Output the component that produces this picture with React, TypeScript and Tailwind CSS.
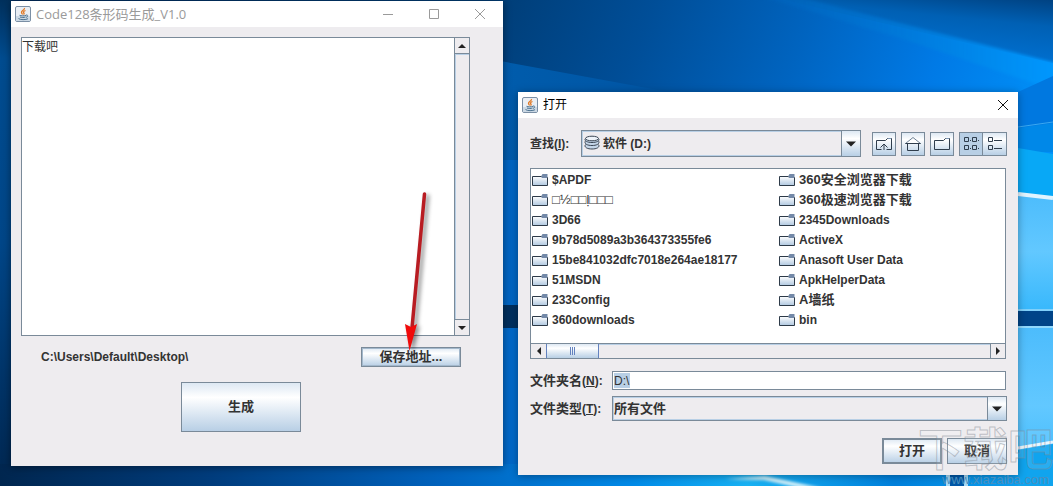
import type { ReactNode } from 'react';
import { clsx } from 'clsx';

const FOLDERS = [
  { name: '$APDF' },
  { name: '□½□□ḷ□□□', plain: true },
  { name: '3D66' },
  { name: '9b78d5089a3b364373355fe6' },
  { name: '15be841032dfc7018e264ae18177' },
  { name: '51MSDN' },
  { name: '233Config' },
  { name: '360downloads' },
  { name: '360安全浏览器下载', cjk: true },
  { name: '360极速浏览器下载', cjk: true },
  { name: '2345Downloads' },
  { name: 'ActiveX' },
  { name: 'Anasoft User Data' },
  { name: 'ApkHelperData' },
  { name: 'A墙纸', cjk: true },
  { name: 'bin' },
];

const METAL = 'bg-linear-to-b from-[#dde8f3] via-white via-30% to-[#b8cfe5] border border-[#7a8a99]';

function Wallpaper() {
  return (
    <svg className="absolute inset-0 h-full w-full" viewBox="0 0 1053 486" preserveAspectRatio="none" aria-hidden="true">
      <defs>
        <linearGradient id="sky" x1="0" y1="0" x2="1" y2=".2">
          <stop offset="0" stopColor="#002b5c" />
          <stop offset=".44" stopColor="#003c74" />
          <stop offset=".6" stopColor="#004e98" />
          <stop offset=".75" stopColor="#0064c0" />
          <stop offset=".88" stopColor="#007ae6" />
          <stop offset="1" stopColor="#0090f8" />
        </linearGradient>
        <linearGradient id="upper" x1=".6" y1="1" x2="1" y2="0">
          <stop offset="0" stopColor="#0074d8" />
          <stop offset=".6" stopColor="#0060b4" />
          <stop offset="1" stopColor="#003c78" />
        </linearGradient>
        <linearGradient id="beam" x1="0" y1="0" x2="1" y2="0">
          <stop offset="0" stopColor="#0060b8" stopOpacity=".5" />
          <stop offset="1" stopColor="#0098ff" />
        </linearGradient>
        <linearGradient id="lower" x1="0" y1="0" x2="1" y2="0">
          <stop offset="0" stopColor="#005cac" />
          <stop offset="1" stopColor="#0055a4" />
        </linearGradient>
        <linearGradient id="strip" x1="0" y1="0" x2="0" y2="1">
          <stop offset="0" stopColor="#00305c" />
          <stop offset=".12" stopColor="#004c90" />
          <stop offset=".5" stopColor="#004688" />
          <stop offset="1" stopColor="#00264f" />
        </linearGradient>
        <linearGradient id="floor" x1="0" y1="0" x2="1" y2="0">
          <stop offset="0" stopColor="#00264f" />
          <stop offset=".2" stopColor="#003c7c" />
          <stop offset=".42" stopColor="#0062bd" />
          <stop offset=".6" stopColor="#008ae8" />
          <stop offset=".71" stopColor="#18b2f4" />
          <stop offset=".85" stopColor="#0080dc" />
          <stop offset="1" stopColor="#10a8f4" />
        </linearGradient>
        <linearGradient id="pane" x1="0" y1="0" x2="0" y2="1">
          <stop offset="0" stopColor="#4cbcfc" />
          <stop offset=".5" stopColor="#62c8ff" />
          <stop offset="1" stopColor="#38b8fc" />
        </linearGradient>
        <filter id="soft" x="-20%" y="-40%" width="140%" height="180%">
          <feGaussianBlur stdDeviation="1.5" />
        </filter>
      </defs>
      <rect width="1053" height="486" fill="url(#sky)" />
      <path d="M785 0 L1060 65 V-5 H775 Z" fill="url(#upper)" />
      <path d="M755 -5 L790 -5 L1060 64 V92 L900 38 Z" fill="url(#beam)" filter="url(#soft)" />
      <rect width="11" height="486" fill="url(#strip)" />
      <path d="M495 60 L680 94 V320 H495Z" fill="url(#lower)" />
      <path d="M503 160 h15 v145 h-15Z" fill="#0066c4" />
      <path d="M503 305 h15 v23 h-15Z" fill="#00305f" />
      <path d="M503 328 h15 v158 h-15Z" fill="#0069c9" />
      <rect y="464" width="1053" height="24" fill="url(#floor)" />
      <path d="M1018 92 L1053 76 V145 H1018Z" fill="#0078e0" />
      <path d="M1018 128 L1053 123 V152 H1018Z" fill="#0088e8" />
      <path d="M1018 127 L1053 122" stroke="#3aa8f0" />
      <path d="M1018 148 L1053 154 V198 L1018 193Z" fill="#08a8f6" />
      <path d="M1018 193 L1053 197 V310 H1018Z" fill="url(#pane)" />
      <path d="M1018 194 L1053 198" stroke="#e0f4ff" strokeWidth="4" />
      <path d="M1018 310 H1053" stroke="#80d0fa" strokeWidth="2" />
      <rect x="1018" y="311" width="35" height="15" fill="#004488" />
      <rect x="1018" y="326" width="35" height="160" fill="url(#pane)" />
      <path d="M1018 327 H1053" stroke="#90d8fc" strokeWidth="2" />
      <path d="M1018 448 L1053 442" stroke="#e8f6ff" strokeWidth="3" />
      <path d="M1018 450 L1053 444 V486 H1018Z" fill="#10a4ee" />
      <path d="M725 479 L765 476 L822 488 H800 L764 480Z" fill="#d4f2fb" filter="url(#soft)" />
      <path d="M946 475 h4 v11 h-4Z M964 475 h4 v11 h-4Z" fill="#a8daf6" />
      <path d="M950 475 h14 v11 h-14Z" fill="#0058a8" />
    </svg>
  );
}

function JavaIcon() {
  return (
    <svg className="h-4 w-4 shrink-0" viewBox="0 0 16 16" fill="none" aria-hidden="true">
      <rect x=".5" y=".5" width="15" height="15" rx="1.5" fill="#e9eef4" stroke="#7b8fa5" />
      <path d="M1 10 H15 V15 H1Z" fill="#cbd8e4" />
      <path d="M9.500 2 C10 4 6 4.500 6.500 6.500 C6.700 7.300 7.500 7.700 7.300 8.500 M10.500 4.500 C8 5.500 8.200 6.300 9 7.200 C9.500 7.800 8.700 8.300 8.500 8.500" stroke="#e07824" strokeWidth="1.3" />
      <path d="M4.500 9.300 C6 10 9.500 10 11 9.300 M11 9 C13.500 8.600 13.200 11 11 11.300 M5 11 C6.500 11.700 9 11.700 10.500 11 M3.500 12.500 C5 14 11 14 13 12.700" stroke="#4d7391" />
    </svg>
  );
}

function FolderIcon() {
  return (
    <svg className="h-4 w-4 shrink-0" viewBox="0 0 16 16" aria-hidden="true">
      <defs>
        <linearGradient id="folder" x1="0" y1="0" x2="0" y2="1">
          <stop offset="0" stopColor="#fff" />
          <stop offset="1" stopColor="#b0c8e0" />
        </linearGradient>
      </defs>
      <path d="M.5 4.500 H9.500 V5.500 H15.500 V13.500 H.5Z" fill="url(#folder)" />
      <path d="M9 4.500 L10.500 2 H15.500 V5 H9Z" fill="#7389a8" />
      <path d="M.5 13.500 V4.500 H9 L10 5.500 H15.500 V13.500Z" fill="none" stroke="#2d3a48" />
      <path d="M10 5.500 H15" stroke="#7389a8" />
    </svg>
  );
}

function DriveIcon() {
  return (
    <svg className="pointer-events-none absolute left-[2px] top-[4px] h-4 w-4" viewBox="0 0 16 16" fill="#c5d6e8" stroke="#3b4654" aria-hidden="true">
      <path d="M1.500 9.500 C0 11.500 2 14 8 14 C14 14 16 11.500 14.500 9.500" />
      <path d="M1.500 6 C0 8 2 10.500 8 10.500 C14 10.500 16 8 14.500 6" />
      <path d="M1.500 3.500 C0 5 2 7.500 8 7.500 C14 7.500 16 5 14.500 3.500" />
      <ellipse cx="8" cy="3.500" rx="6.500" ry="2.300" fill="#eef3f9" />
    </svg>
  );
}

function Arrow({ dir, large }: { dir: 'up' | 'down' | 'left' | 'right'; large?: boolean }) {
  const paths = {
    up: 'M0 6 H8 L4 2Z',
    down: 'M0 2 H8 L4 6Z',
    left: 'M6 0 V8 L2 4Z',
    right: 'M2 0 V8 L6 4Z',
  };
  return (
    <svg className={large ? 'h-[10px] w-[10px]' : 'h-2 w-2'} viewBox="0 0 8 8" aria-hidden="true">
      <path d={paths[dir]} fill="#222" />
    </svg>
  );
}

function WindowButton({ label, children }: { label: string; children: ReactNode }) {
  return (
    <button type="button" aria-label={label} className="flex h-full w-[46px] items-center justify-center">
      <svg className="h-3 w-3" viewBox="0 0 12 12" fill="none" stroke="currentColor" aria-hidden="true">
        {children}
      </svg>
    </button>
  );
}

function ToolButton({ label, active, className, children }: { label: string; active?: boolean; className?: string; children: ReactNode }) {
  return (
    <button
      type="button"
      aria-label={label}
      className={clsx(
        'flex h-6 w-6 items-center justify-center',
        active ? 'border border-[#7a8a99] bg-[#b8cfe5]' : METAL,
        className,
      )}
    >
      <svg className="h-4 w-4 shrink-0" viewBox="0 0 16 16" fill="none" stroke="#2f3d4c" aria-hidden="true">
        {children}
      </svg>
    </button>
  );
}

function Combo({ id, value, icon, className }: { id: string; value: string; icon?: ReactNode; className?: string }) {
  return (
    <div className={clsx('relative border border-[#7a8a99]', className)}>
      <select
        id={id}
        className={clsx(
          'block h-full w-full appearance-none border border-[#b8cfe5] bg-[#eeecef] pr-6 font-bold outline-none',
          icon ? 'pl-5' : 'pl-0',
        )}
      >
        <option>{value}</option>
      </select>
      {icon}
      <span className="pointer-events-none absolute inset-y-0 right-0 flex w-[19px] items-center justify-center border-l border-[#7a8a99] bg-linear-to-b from-[#dde8f3] via-white via-30% to-[#b8cfe5]">
        <Arrow dir="down" large />
      </span>
    </div>
  );
}

function GeneratorWindow() {
  return (
    <section className="absolute left-[11px] top-px w-[492px] bg-[#eeecef] shadow-[0_1px_8px_rgba(0,0,0,0.45)]">
      <header className="flex h-[26px] items-center bg-white pl-1 text-[#9a9a9a]">
        <JavaIcon />
        <h1 className="flex-1 pl-[5px] font-['Open_Sans','Noto_Sans_CJK_SC',sans-serif] text-[13px] font-normal leading-4">
          Code128条形码生成_V1.0
        </h1>
        <WindowButton label="最小化"><path d="M1 6.500 H11" /></WindowButton>
        <WindowButton label="最大化"><path d="M1.500 1.500 H10.500 V10.500 H1.500Z" /></WindowButton>
        <WindowButton label="关闭"><path d="M1 1 L11 11 M11 1 L1 11" /></WindowButton>
      </header>

      <div className="pb-[34px] pl-[10px] pr-[33px] pt-[10px]">
        <div className="flex h-[299px] border border-[#7a8a99] bg-white">
          <textarea
            aria-label="条形码内容"
            className="block flex-1 resize-none overflow-hidden text-[12px] font-normal leading-[18px] outline-none"
            defaultValue="下载吧"
          />
          <div className="flex w-[15px] flex-col border-l border-[#7a8a99] bg-[#eeecef]">
            <button type="button" aria-label="向上" className="flex h-4 items-center justify-center border-b border-[#7a8a99]">
              <Arrow dir="up" />
            </button>
            <div className="flex-1 border-l border-t border-[#b8cfe5]" />
            <button type="button" aria-label="向下" className="flex h-4 items-center justify-center border-t border-[#7a8a99]">
              <Arrow dir="down" />
            </button>
          </div>
        </div>

        <div className="mt-[11px] flex h-5 items-center justify-between pl-5 pr-[9px]">
          <span>C:\Users\Default\Desktop\</span>
          <button type="button" className={clsx(METAL, 'h-5 w-[100px] text-[13px] leading-4 ring-1 ring-inset ring-[#a3b8cc]')}>
            保存地址...
          </button>
        </div>
        <button type="button" className={clsx(METAL, 'ml-40 mt-[15px] block h-[50px] w-[120px] text-[13px]')}>
          生成
        </button>
      </div>
    </section>
  );
}

function OpenDialog() {
  return (
    <section className="absolute left-[518px] top-[92px] w-[500px] bg-[#eeecef] shadow-[0_1px_8px_rgba(0,0,0,0.35)]">
      <header className="flex h-[26px] items-center bg-white pl-1">
        <JavaIcon />
        <h2 className="flex-1 pl-[5px] text-[12px] font-normal leading-4 text-black">打开</h2>
        <button type="button" aria-label="关闭" className="flex h-full w-[30px] items-center justify-center">
          <svg className="h-3 w-3" viewBox="0 0 12 12" stroke="#111" aria-hidden="true">
            <path d="M1 1 L11 11 M11 1 L1 11" />
          </svg>
        </button>
      </header>

      <form className="pb-[11px] pl-3 pr-[11px] pt-3 text-[13px]" onSubmit={(e) => e.preventDefault()}>
        <div className="flex items-center">
          <label htmlFor="look" className="w-[51px] text-[12px]">
            查找(<span className="underline">I</span>):
          </label>
          <Combo id="look" value="软件 (D:)" className="h-[27px] flex-1 text-[12px]" icon={<DriveIcon />} />
          <div className="ml-[11px] flex gap-[5px]">
            <ToolButton label="上一级">
              <path d="M5.500 13.500 H.5 V4.500 H9.500 L11.500 2.500 H15.500 V13.500 H10.500" />
              <path d="M12 2.500 H15" stroke="#7a94b4" />
              <path d="M8 14 V8 M4.500 11.500 L8 8 L11.500 11.500" />
            </ToolButton>
            <ToolButton label="主目录">
              <path d="M.5 7.500 L8 1.500 L15.500 7.500 H.5Z" fill="#fff" stroke="#6f8296" />
              <path d="M.5 7.500 H15.500 M2.500 7.500 V14.500 H13.500 V7.500" />
            </ToolButton>
            <ToolButton label="新建文件夹">
              <path d="M.5 4.500 H9.500 L11.500 2.500 H15.500 V13.500 H.5Z" />
              <path d="M12 2.500 H15" stroke="#7a94b4" />
            </ToolButton>
            <div className="flex">
              <ToolButton label="列表" active>
                <path d="M1.500 1.500 h4 v4 h-4Z M9.500 1.500 h4 v4 h-4Z M1.500 9.500 h4 v4 h-4Z M9.500 9.500 h4 v4 h-4Z M7 4.500 h1 M15 4.500 h1 M7 12.500 h1 M15 12.500 h1" />
              </ToolButton>
              <ToolButton label="详细信息" className="border-l-0">
                <path d="M1.500 1.500 h4 v4 h-4Z M1.500 9.500 h4 v4 h-4Z M7 4.500 H15 M7 12.500 H15" />
              </ToolButton>
            </div>
          </div>
        </div>

        <div className="mr-px mt-[11px] border border-[#7a8a99] bg-white">
          <ul className="grid h-[174px] grid-flow-col grid-cols-[247px_1fr] grid-rows-[repeat(8,20px)] pl-px pt-px">
            {FOLDERS.map(({ name, plain, cjk }) => (
              <li
                key={name}
                className={clsx('flex items-center gap-1', cjk ? 'text-[13px]' : 'text-[12px]', plain && 'text-[13px] font-normal')}
              >
                <FolderIcon />
                {name}
              </li>
            ))}
          </ul>
          <div className="flex h-[15px] border-t border-[#7a8a99] bg-[#eeecef]">
            <button type="button" aria-label="向左" className="flex w-[15px] items-center justify-center">
              <Arrow dir="left" />
            </button>
            <div className="flex w-[53px] items-center justify-center gap-px border-x border-[#6382bf] bg-linear-to-b from-[#dde8f3] via-white via-30% to-[#b8cfe5]">
              <i className="h-2 w-px bg-[#6382bf]" />
              <i className="h-2 w-px bg-[#6382bf]" />
              <i className="h-2 w-px bg-[#6382bf]" />
            </div>
            <div className="flex-1 border-t border-[#b8cfe5]" />
            <button type="button" aria-label="向右" className="flex w-[15px] items-center justify-center border-l border-[#7a8a99]">
              <Arrow dir="right" />
            </button>
          </div>
        </div>

        <div className="mt-3 flex items-center">
          <label htmlFor="folder-name" className="w-[82px] leading-4">
            文件夹名<span className="text-[12px]">(<span className="underline">N</span>):</span>
          </label>
          <div className="mr-px flex h-[19px] flex-1 items-center border border-[#7a8a99] bg-white pl-px">
            <input
              id="folder-name"
              className="h-[15px] w-4 bg-[#b8cfe5] text-[12px] font-normal outline-none"
              defaultValue="D:\"
            />
          </div>
        </div>
        <div className="mt-[6px] flex items-center">
          <label htmlFor="file-type" className="w-[82px]">
            文件类型<span className="text-[12px]">(<span className="underline">T</span>):</span>
          </label>
          <Combo id="file-type" value="所有文件" className="h-[25px] flex-1" />
        </div>

        <div className="mt-[17px] flex justify-end gap-[5px]">
          <button type="submit" className={clsx(METAL, 'h-[26px] w-[60px] ring-1 ring-inset ring-[#7a8a99]')}>打开</button>
          <button type="button" className={clsx(METAL, 'h-[26px] w-[60px]')}>取消</button>
        </div>
      </form>
    </section>
  );
}

function Pointer() {
  return (
    <svg className="pointer-events-none absolute left-[395px] top-[185px] h-[175px] w-[50px]" viewBox="0 0 50 175" aria-hidden="true">
      <g className="drop-shadow-[3px_2px_2px_rgba(0,0,0,0.45)]">
        <path d="M29.500 9 L17 143" stroke="#b81c22" strokeWidth="3.500" strokeLinecap="round" />
        <path d="M10 139 L16 142 L22 139 L14.500 166Z" fill="#f00a0a" />
      </g>
    </svg>
  );
}

function Watermark() {
  return (
    <div className="pointer-events-none absolute bottom-0 right-0 w-[136px] text-right">
      <p className="whitespace-nowrap text-[45px] font-bold leading-[45px] text-white/10 [-webkit-text-stroke:1px_rgba(125,132,142,0.45)]">下载吧</p>
      <p className="pr-1 text-[13px] font-normal leading-[13px] text-[#4a8fbe]">www.xiazaiba.com</p>
    </div>
  );
}

export default function App() {
  return (
    <main className="relative h-screen overflow-hidden bg-[#004a94] font-['Liberation_Sans','Noto_Sans_CJK_SC',sans-serif] text-[12px] font-bold text-[#333]">
      <Wallpaper />
      <GeneratorWindow />
      <OpenDialog />
      <Pointer />
      <Watermark />
    </main>
  );
}
